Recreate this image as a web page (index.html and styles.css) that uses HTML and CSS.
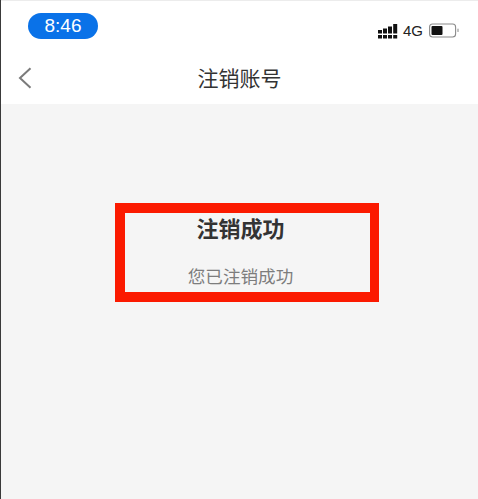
FILE: index.html
```html
<!DOCTYPE html>
<html lang="zh-CN">
<head>
    <meta charset="UTF-8">
    <meta name="viewport" content="width=device-width, initial-scale=1.0">
    <title>注销账号</title>
    <link rel="stylesheet" href="styles.css">
</head>

<body>
<div class="page">
    <!-- 状态栏 -->
    <div class="status-bar">
        <div class="time-pill">8:46</div>
        <div class="status-icons">
            <svg class="signal" width="20" height="16" viewBox="0 0 20 16">
                <g fill="#111">
                    <rect x="0" y="7" width="4" height="3.5"/>
                    <rect x="0" y="12" width="4" height="3.5"/>
                    <rect x="5" y="5.5" width="4" height="5"/>
                    <rect x="5" y="12" width="4" height="3.5"/>
                    <rect x="10" y="3.5" width="4" height="7"/>
                    <rect x="10" y="12" width="4" height="3.5"/>
                    <rect x="15.2" y="1" width="4" height="9.5"/>
                    <rect x="15.2" y="12" width="4" height="3.5"/>
                </g>
            </svg>
            <span class="network">4G</span>
            <svg class="battery" width="30" height="15" viewBox="0 0 30 15">
                <rect x="0.6" y="1" width="26" height="13" rx="3" fill="none" stroke="#8a8a8a" stroke-width="1.1"/>
                <rect x="2.5" y="3" width="11" height="9" rx="1" fill="#111"/>
                <rect x="28.4" y="5.5" width="1.2" height="3.5" rx="0.6" fill="#999"/>
            </svg>
        </div>
    </div>

    <!-- 导航栏 -->
    <div class="nav-bar">
        <svg class="back" width="14" height="22" viewBox="0 0 14 22">
            <path d="M12.5 1.2 L2 11 L12.5 20.8" fill="none" stroke="#7b7b7b" stroke-width="2"/>
        </svg>
        <h1>注销账号</h1>
    </div>

    <!-- 内容 -->
    <div class="content">
        <div class="notice">
            <div class="notice-title">注销成功</div>
            <div class="notice-text">您已注销成功</div>
        </div>
    </div>
</div>
</body>
</html>
```

FILE: styles.css
```css
* {
    box-sizing: border-box;
    margin: 0;
    padding: 0;
}

html, body {
    height: 100%;
}

body {
    font-family: "Liberation Sans", "Noto Sans CJK SC", sans-serif;
    background-color: #f5f5f5;
    overflow: hidden;
}

.page {
    height: 499px;
    display: flex;
    flex-direction: column;
    border-left: 1px solid #3a3a3a;
}

.status-bar {
    height: 52px;
    flex-shrink: 0;
    background: white;
    border-top: 1px solid #ececec;
    display: flex;
    justify-content: space-between;
    align-items: flex-start;
    padding: 12px 19px 0 27px;
}

.time-pill {
    width: 70px;
    height: 26px;
    border-radius: 13px;
    background: #0a72e8;
    color: white;
    font-size: 19px;
    line-height: 26px;
    text-align: center;
}

.status-icons {
    display: flex;
    align-items: center;
    gap: 6px;
    margin-top: 9px;
}

.network {
    font-size: 15px;
    color: #222;
    margin-left: -1px;
}

.nav-bar {
    height: 52px;
    flex-shrink: 0;
    background: white;
    display: flex;
    align-items: center;
    justify-content: center;
    position: relative;
}

.back {
    position: absolute;
    left: 17px;
    top: 15px;
}

h1 {
    font-size: 21px;
    font-weight: 400;
    color: #333;
    margin-bottom: 2px;
}

.content {
    flex: 1;
    background: #f5f5f5;
    padding: 99px 99px 0 114px;
}

.notice {
    height: 99px;
    border: solid #fb1a00;
    border-width: 10px 9px 10px 10px;
    padding-right: 14px;
    text-align: center;
}

.notice-title {
    font-size: 22px;
    font-weight: 700;
    color: #333;
    line-height: 28px;
    margin-top: 3px;
}

.notice-text {
    font-size: 17.6px;
    color: #7d7d7d;
    line-height: 24px;
    margin-top: 21px;
}
```
